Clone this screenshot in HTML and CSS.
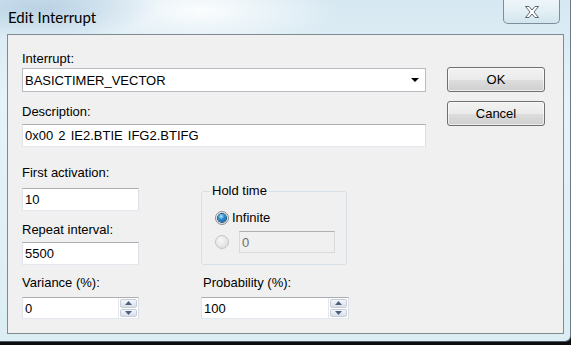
FILE: index.html
```html
<!DOCTYPE html>
<html lang="en">
<head>
    <meta charset="UTF-8">
    <title>Edit Interrupt</title>
    <link rel="stylesheet" href="styles.css">
</head>
<body>
    <div class="window">
        <div class="titlebar">
            <span class="title">Edit Interrupt</span>
            <div class="close-btn">
                <svg width="16" height="14" viewBox="0 0 16 14">
                    <path d="M1.5 1.5 H5 L8 5 L11 1.5 H14.5 L10 7 L14.5 12.5 H11 L8 9 L5 12.5 H1.5 L6 7 Z" fill="#ffffff" stroke="#5d6670" stroke-width="1" stroke-linejoin="round"/>
                </svg>
            </div>
        </div>
        <div class="client">
            <div class="form">
                <div class="lbl lbl-first">Interrupt:</div>
                <div class="combo">
                    <span>BASICTIMER_VECTOR</span>
                    <svg class="combo-arrow" width="8" height="4" viewBox="0 0 8 4"><path d="M0 0 H8 L4 4 Z" fill="#000"/></svg>
                </div>
                <div class="lbl lbl-desc">Description:</div>
                <div class="field field-desc">0x00 2 IE2.BTIE IFG2.BTIFG</div>

                <div class="lower">
                    <div class="col-left">
                        <div class="lbl lbl-activation">First activation:</div>
                        <div class="field field-short field-activation">10</div>
                        <div class="lbl lbl-repeat">Repeat interval:</div>
                        <div class="field field-short field-repeat">5500</div>
                        <div class="lbl lbl-variance">Variance (%):</div>
                        <div class="field spin field-variance">
                            <span class="spin-text">0</span>
                            <div class="spin-btns">
                                <div class="spin-btn"><svg width="7" height="4" viewBox="0 0 7 4"><path d="M0 4 L3.5 0 L7 4 Z" fill="#4e607c"/></svg></div>
                                <div class="spin-btn"><svg width="7" height="4" viewBox="0 0 7 4"><path d="M0 0 L3.5 4 L7 0 Z" fill="#4e607c"/></svg></div>
                            </div>
                        </div>
                    </div>
                    <div class="col-right">
                        <fieldset class="group">
                            <legend>Hold time</legend>
                            <div class="radio-row row-infinite">
                                <span class="radio checked"></span>
                                <span class="radio-label">Infinite</span>
                            </div>
                            <div class="radio-row row-value">
                                <span class="radio disabled"></span>
                                <div class="field field-disabled">0</div>
                            </div>
                        </fieldset>
                        <div class="lbl lbl-prob">Probability (%):</div>
                        <div class="field spin field-prob">
                            <span class="spin-text">100</span>
                            <div class="spin-btns">
                                <div class="spin-btn"><svg width="7" height="4" viewBox="0 0 7 4"><path d="M0 4 L3.5 0 L7 4 Z" fill="#4e607c"/></svg></div>
                                <div class="spin-btn"><svg width="7" height="4" viewBox="0 0 7 4"><path d="M0 0 L3.5 4 L7 0 Z" fill="#4e607c"/></svg></div>
                            </div>
                        </div>
                    </div>
                </div>
            </div>
            <div class="buttons">
                <button class="btn">OK</button>
                <button class="btn">Cancel</button>
            </div>
        </div>
    </div>
</body>
</html>
```

FILE: styles.css
```css
* {
    box-sizing: border-box;
}
body {
    margin: 0;
    background-color: #0d0d0d;
    font-family: "Liberation Sans", Arial, sans-serif;
    font-size: 13px;
    color: #000;
}
.window {
    width: 571px;
    height: 342px;
    display: flex;
    flex-direction: column;
    border-bottom: 1px solid #4a5a66;
    border-right: 1px solid #6a7a86;
    border-radius: 0 0 6px 0;
    background:
        radial-gradient(ellipse 120px 30px at 40px 8px, rgba(180, 205, 225, 0.8), rgba(180, 205, 225, 0)),
        radial-gradient(ellipse 140px 40px at 200px 10px, rgba(255, 255, 255, 0.9), rgba(255, 255, 255, 0)),
        linear-gradient(to bottom, #d6e8f2 0%, #e6f3f8 30%, #dcedf4 100%);
}
.titlebar {
    height: 34px;
    display: flex;
    justify-content: space-between;
    align-items: flex-start;
    padding-left: 8px;
}
.title {
    margin-top: 7px;
    font-family: Lato, sans-serif;
    font-size: 15px;
    line-height: 20px;
    color: #000;
}
.close-btn {
    width: 57px;
    height: 24px;
    margin-right: 10px;
    display: flex;
    align-items: center;
    justify-content: center;
    border: 1px solid #7d8d99;
    border-top: none;
    border-radius: 0 0 5px 5px;
    background: linear-gradient(to bottom, #eef6fa 0%, #e2eff5 50%, #d2e5ee 100%);
}
.client {
    height: 300px;
    margin: 0 6px 0 7px;
    display: flex;
    padding: 16px 0 0 14px;
    background-color: #f0f0f0;
    border: 1px solid #7f8a93;
}
.form {
    width: 404px;
}
.lbl {
    line-height: 16px;
    height: 16px;
}
.lbl-first {
    margin-bottom: 1px;
}
.lbl-desc {
    margin-top: 12px;
    margin-bottom: 4px;
}
.combo {
    height: 24px;
    display: flex;
    align-items: center;
    justify-content: space-between;
    padding: 0 6px 0 2px;
    background-color: #fff;
    border: 1px solid #b9bcc2;
}
.field {
    height: 23px;
    line-height: 21px;
    padding-left: 2px;
    background-color: #fff;
    border: 1px solid;
    border-color: #abadb3 #dbdfe6 #e3e9ef #e2e3ea;
    white-space: pre;
}
.field-desc {
    word-spacing: 1.5px;
}
.lower {
    display: flex;
}
.col-left {
    width: 117px;
}
.col-right {
    width: 148px;
    margin-left: 62px;
}
.lbl-activation {
    margin-top: 18px;
    margin-bottom: 7px;
}
.lbl-repeat {
    margin-top: 11px;
    margin-bottom: 4px;
}
.lbl-variance {
    margin-top: 10px;
    margin-bottom: 6px;
}
.lbl-prob {
    margin-top: 10px;
    margin-bottom: 6px;
    padding-left: 2px;
}
.spin {
    height: 22px;
    display: flex;
    padding-right: 0;
}
.spin-text {
    flex: 1;
}
.spin-btns {
    width: 20px;
    display: flex;
    flex-direction: column;
    gap: 1px;
    padding: 1px;
    border-left: 1px solid #e3e6ea;
}
.spin-btn {
    flex: 1;
    display: flex;
    align-items: center;
    justify-content: center;
    border: 1px solid #c6ceda;
    border-radius: 2px;
    background: linear-gradient(to bottom, #f4f6fa 0%, #e6ebf2 50%, #d8dfe9 100%);
}
.group {
    width: 146px;
    margin: 36px 0 0 0;
    padding: 0 10px 11px 13px;
    border: 1px solid #d5dfe5;
    border-radius: 3px;
}
.group legend {
    margin-left: -5px;
    padding: 0 2px;
    line-height: 16px;
}
.radio-row {
    display: flex;
    align-items: center;
}
.row-infinite {
    height: 17px;
    margin-top: 10px;
}
.row-value {
    height: 22px;
    margin-top: 5px;
}
.radio {
    width: 14px;
    height: 14px;
    flex: none;
    display: flex;
    align-items: center;
    justify-content: center;
    border-radius: 50%;
    border: 1px solid #8c8e92;
    background: radial-gradient(circle at 40% 35%, #ffffff 0%, #e6e6e6 60%, #cfcfcf 100%);
}
.radio.checked::after {
    content: "";
    width: 8px;
    height: 8px;
    border-radius: 50%;
    background: radial-gradient(circle at 40% 30%, #bdeaff 0%, #2f8ed0 40%, #0b4a86 100%);
    box-shadow: 0 0 0 1px #174f7e;
}
.radio.disabled {
    border-color: #c2c4c6;
    background: radial-gradient(circle at 40% 35%, #f8f8f8 0%, #e4e4e4 60%, #d6d6d6 100%);
}
.radio-label {
    margin-left: 3px;
    line-height: 16px;
}
.field-disabled {
    width: 96px;
    height: 22px;
    margin-left: 10px;
    color: #6d6d6d;
    background-color: #f0f0f0;
    border-color: #adb2b5 #dadada #dadada #dadada;
}
.buttons {
    width: 98px;
    margin-left: 21px;
    margin-top: 16px;
    display: flex;
    flex-direction: column;
    gap: 9px;
}
.btn {
    height: 25px;
    padding: 0;
    font-family: "Liberation Sans", Arial, sans-serif;
    font-size: 13px;
    color: #000;
    border: 1px solid #707070;
    border-radius: 3px;
    background: linear-gradient(to bottom, #f2f2f2 0%, #ebebeb 50%, #dddddd 51%, #cfcfcf 100%);
    box-shadow: inset 0 0 0 1px rgba(255, 255, 255, 0.6);
}
```
